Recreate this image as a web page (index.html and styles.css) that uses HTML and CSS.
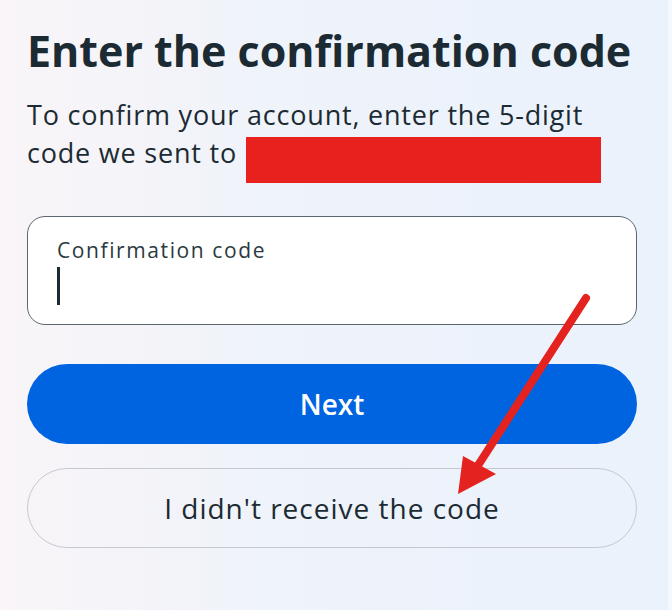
FILE: index.html
```html
<!DOCTYPE html>
<html lang="en">
<head>
    <meta charset="UTF-8">
    <meta name="viewport" content="width=device-width, initial-scale=1.0">
    <title>Enter the confirmation code</title>
    <link rel="stylesheet" href="styles.css">
</head>
<body>
    <div class="screen">
        <h1 class="title">Enter the confirmation code</h1>
        <p class="intro">To confirm your account, enter the 5-digit code we sent to <span class="redact"></span></p>

        <label class="field">
            <span class="field-label">Confirmation code</span>
            <span class="caret"></span>
        </label>

        <button class="btn btn-primary">Next</button>
        <button class="btn btn-outline">I didn't receive the code</button>

        <!-- annotation arrow drawn over the screenshot -->
        <svg class="arrow" width="672" height="610" viewBox="0 0 672 610">
            <line x1="586" y1="298" x2="477" y2="467" stroke="#e42320" stroke-width="8" stroke-linecap="round"/>
            <polygon points="458,494 463,456 496,474" fill="#e42320"/>
        </svg>
    </div>
</body>
</html>
```

FILE: styles.css
```css
body { margin: 0; font-family: "Open Sans", "Noto Sans", sans-serif; color: #1c2b33; }
.screen { position: relative; width: 672px; height: 610px; box-sizing: border-box; padding: 26px 31px 0 27px; background: linear-gradient(90deg, #f9f5f8 0%, #eff3fa 40%, #eaf2fc 100%); border-right: 4px solid #f4f7fb; overflow: hidden; }
.title { margin: 0; font-size: 43px; font-weight: 700; line-height: 50px; white-space: nowrap; }
.intro { margin: 20px 0 0; width: 590px; font-size: 27px; line-height: 38px; letter-spacing: 0.8px; }
.redact { display: inline-block; vertical-align: top; width: 355px; height: 46px; margin: 3px 0 -11px 1px; background: #e8201e; }
.field { display: flex; flex-direction: column; margin-top: 44px; height: 109px; box-sizing: border-box; border: 1px solid #5b6570; border-radius: 18px; background: #fff; padding: 19px 29px 0; }
.field-label { font-size: 21px; line-height: 28px; letter-spacing: 1.6px; color: #2b3940; }
.caret { width: 3px; height: 38px; background: #1c2b33; margin-top: 3px; }
.btn { display: block; width: 100%; height: 80px; border-radius: 40px; font-family: inherit; font-size: 28px; }
.btn-primary { margin-top: 39px; border: none; background: #0064e0; color: #fff; font-weight: 600; }
.btn-outline { margin-top: 24px; border: 1px solid #c3c9cf; background: transparent; color: #1c2b33; letter-spacing: 1px; }
.arrow { position: absolute; left: 0; top: 0; }
```
